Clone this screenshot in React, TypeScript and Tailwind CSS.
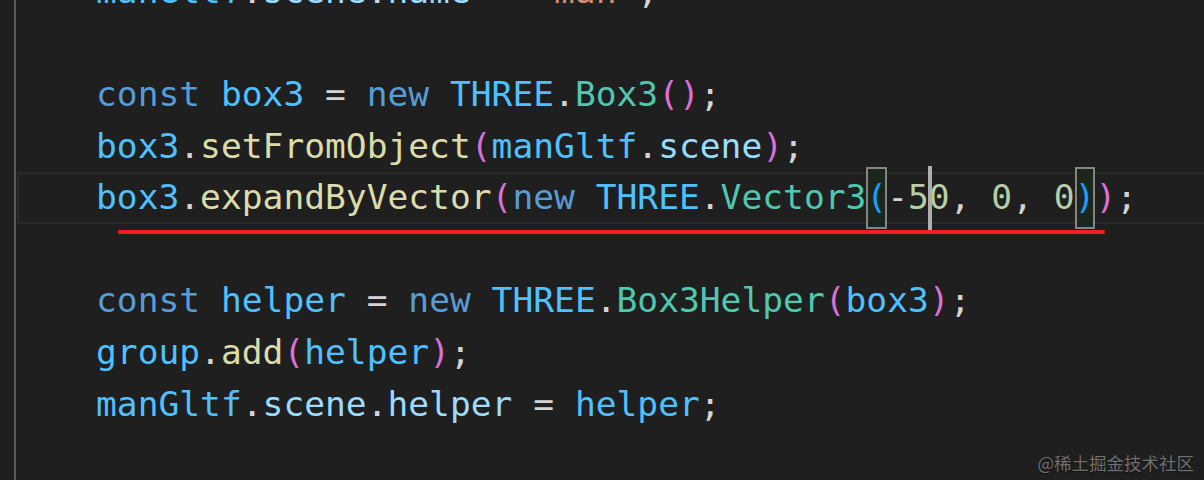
import React from "react";

type Tok = [string, string];

const kw = "text-[#569cd6]";
const v = "text-[#4fc1ff]";
const p = "text-[#9cdcfe]";
const cls = "text-[#4ec9b0]";
const fn = "text-[#dcdcaa]";
const pun = "text-[#d4d4d4]";
const num = "text-[#b5cea8]";
const str = "text-[#ce9178]";
const b2 = "text-[#da70d6]";

const lines: Tok[][] = [
  [["manGltf", v], [".", pun], ["scene", p], [".", pun], ["name", p], [" = ", pun], ['"man"', str], [";", pun]],
  [],
  [["const", kw], [" ", pun], ["box3", v], [" = ", pun], ["new", kw], [" ", pun], ["THREE", v], [".", pun], ["Box3", cls], ["()", b2], [";", pun]],
  [["box3", v], [".", pun], ["setFromObject", fn], ["(", b2], ["manGltf", v], [".", pun], ["scene", p], [")", b2], [";", pun]],
  [],
  [],
  [["const", kw], [" ", pun], ["helper", v], [" = ", pun], ["new", kw], [" ", pun], ["THREE", v], [".", pun], ["Box3Helper", cls], ["(", b2], ["box3", v], [")", b2], [";", pun]],
  [["group", v], [".", pun], ["add", fn], ["(", b2], ["helper", v], [")", b2], [";", pun]],
  [["manGltf", v], [".", pun], ["scene", p], [".", pun], ["helper", p], [" = ", pun], ["helper", v], [";", pun]],
  [],
];

const Bracket = ({ ch }: { ch: string }) => (
  <span className="text-[#179fff] bg-[#1c261c] py-[5px] shadow-[inset_0_0_0_2px_#858585]">{ch}</span>
);

const CurrentLine = () => (
  <div className="h-[51.6px] ml-px border-2 border-r-0 border-[#2a2a2a] flex items-center pl-[77px] whitespace-pre">
    <span className={v}>box3</span>
    <span className={pun}>.</span>
    <span className={fn}>expandByVector</span>
    <span className={b2}>(</span>
    <span className={kw}>new</span>
    <span> </span>
    <span className={v}>THREE</span>
    <span className={pun}>.</span>
    <span className={cls}>Vector3</span>
    <Bracket ch="(" />
    <span className={pun}>-</span>
    <span className={num}>5</span>
    <span className="relative">
      <span className={num}>0</span>
      <span className="absolute left-[-1px] top-[-6px] bottom-[-6px] w-[4px] bg-[#aeafad]" />
    </span>
    <span className={pun}>, </span>
    <span className={num}>0</span>
    <span className={pun}>, </span>
    <span className={num}>0</span>
    <Bracket ch=")" />
    <span className={b2}>)</span>
    <span className={pun}>;</span>
  </div>
);

export default function App() {
  return (
    <div
      className="relative w-[1204px] h-[480px] overflow-hidden bg-[#1f1f1f] flex"
      style={{ fontFamily: '"DejaVu Sans Mono", "Liberation Mono", monospace' }}
    >
      <div className="w-[14px] shrink-0" />
      <div className="flex-1 border-l-2 border-[#5a5a5a] text-[34.6px] flex flex-col -mt-[34px]">
        {lines.map((toks, i) =>
          i === 4 ? (
            <CurrentLine key={i} />
          ) : (
            <div key={i} className="h-[51.6px] shrink-0 flex items-center pl-[80px] whitespace-pre">
              {toks.map(([t, c], j) => (
                <span key={j} className={c}>
                  {t}
                </span>
              ))}
            </div>
          )
        )}
      </div>

      <div className="absolute left-[118px] top-[230px] w-[987px] h-[4px] rounded-full bg-[#f51d1d]" />

      <div
        className="absolute right-[10px] top-[450px] text-[17.5px] text-[#6f6f6f] [text-shadow:0_1px_1px_#111]"
        style={{ fontFamily: '"Noto Sans CJK SC", sans-serif' }}
      >
        @稀土掘金技术社区
      </div>
    </div>
  );
}
